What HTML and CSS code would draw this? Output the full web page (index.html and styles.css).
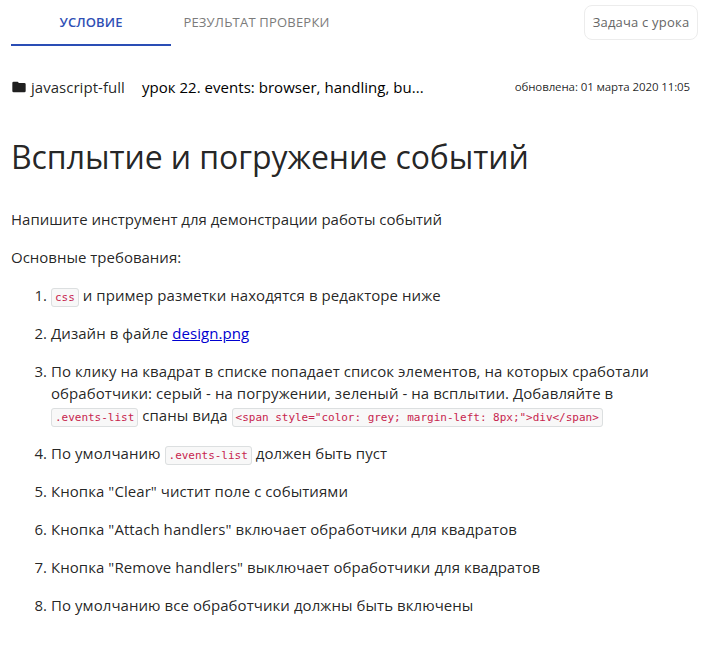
FILE: index.html
```html
<!DOCTYPE html>
<html lang="ru">
<head>
<meta charset="utf-8">
<title>Всплытие и погружение событий</title>
<link rel="stylesheet" href="styles.css">
</head>
<body>
<header class="topbar">
  <nav class="tabs">
    <a class="tab tab-active">УСЛОВИЕ</a>
    <a class="tab">РЕЗУЛЬТАТ ПРОВЕРКИ</a>
  </nav>
  <span class="chip">Задача с урока</span>
</header>
<div class="meta">
  <svg class="folder" viewBox="0 0 24 24"><path d="M10 4H4a2 2 0 0 0-2 2v12a2 2 0 0 0 2 2h16a2 2 0 0 0 2-2V8a2 2 0 0 0-2-2h-8z"/></svg>
  <span class="course">javascript-full</span>
  <span class="lesson">урок 22. events: browser, handling, bu...</span>
  <span class="updated">обновлена: 01 марта 2020 11:05</span>
</div>
<main class="content">
  <h1>Всплытие и погружение событий</h1>
  <p>Напишите инструмент для демонстрации работы событий</p>
  <p>Основные требования:</p>
  <ol class="tasks">
    <li><code>css</code> и пример разметки находятся в редакторе ниже</li>
    <li>Дизайн в файле <a class="link" href="#">design.png</a></li>
    <li>По клику на квадрат в списке попадает список элементов, на которых сработали<br>обработчики: серый - на погружении, зеленый - на всплытии. Добавляйте в<br><code>.events-list</code> спаны вида <code>&lt;span style="color: grey; margin-left: 8px;"&gt;div&lt;/span&gt;</code></li>
    <li>По умолчанию <code>.events-list</code> должен быть пуст</li>
    <li>Кнопка "Clear" чистит поле с событиями</li>
    <li>Кнопка "Attach handlers" включает обработчики для квадратов</li>
    <li>Кнопка "Remove handlers" выключает обработчики для квадратов</li>
    <li>По умолчанию все обработчики должны быть включены</li>
  </ol>
</main>
</body>
</html>
```
FILE: styles.css
```css
* { box-sizing: border-box; }
body {
  margin: 0;
  padding: 0 11px;
  background: #fff;
  color: rgba(0, 0, 0, 0.87);
  font: 400 15px/22px "Open Sans", sans-serif;
  letter-spacing: 0.03px;
}
.topbar { display: flex; justify-content: space-between; height: 46px; }
.tabs { display: flex; }
.tab {
  width: 160px;
  padding-top: 11px;
  text-align: center;
  font-size: 13px;
  letter-spacing: 0.2px;
  white-space: nowrap;
  color: #7b7b7b;
  border-bottom: 2px solid transparent;
}
.tab + .tab { width: 171px; }
.tab-active {
  color: #2f4fb5;
  font-weight: 600;
  letter-spacing: 0.1px;
  border-bottom-color: #2a4db5;
}
.chip {
  width: 114px;
  height: 35px;
  margin: 5px 0 0;
  border: 1px solid #ececec;
  border-radius: 8px;
  font-size: 13px;
  letter-spacing: 0.2px;
  line-height: 33px;
  text-align: center;
  white-space: nowrap;
  color: #666;
}
.meta { display: flex; align-items: center; height: 22px; margin-top: 30px; white-space: nowrap; }
.folder { width: 16px; height: 16px; fill: #202020; }
.course { width: 95px; margin-left: 4px; }
.lesson { margin-left: 16px; color: #000; }
.updated { margin: 0 8px 0 auto; font-size: 11.5px; letter-spacing: -0.11px; }
h1 {
  margin: 37px 0 0;
  font-size: 32px;
  font-weight: 400;
  line-height: 44px;
  letter-spacing: -0.07px;
  white-space: nowrap;
}
p { margin: 16px 0; letter-spacing: 0; }
h1 + p { margin-top: 29px; }
.tasks { margin: 0; padding-left: 40px; letter-spacing: 0.06px; white-space: nowrap; }
.tasks li { margin-bottom: 16px; }
code {
  padding: 2px 3px;
  border: 1px solid #dcdfe0;
  border-radius: 3px;
  background: #f8f8f8;
  color: #c7254e;
  font: 400 11px/1 "DejaVu Sans Mono", monospace;
  letter-spacing: -0.02px;
}
.link { color: #0000d0; }
```
